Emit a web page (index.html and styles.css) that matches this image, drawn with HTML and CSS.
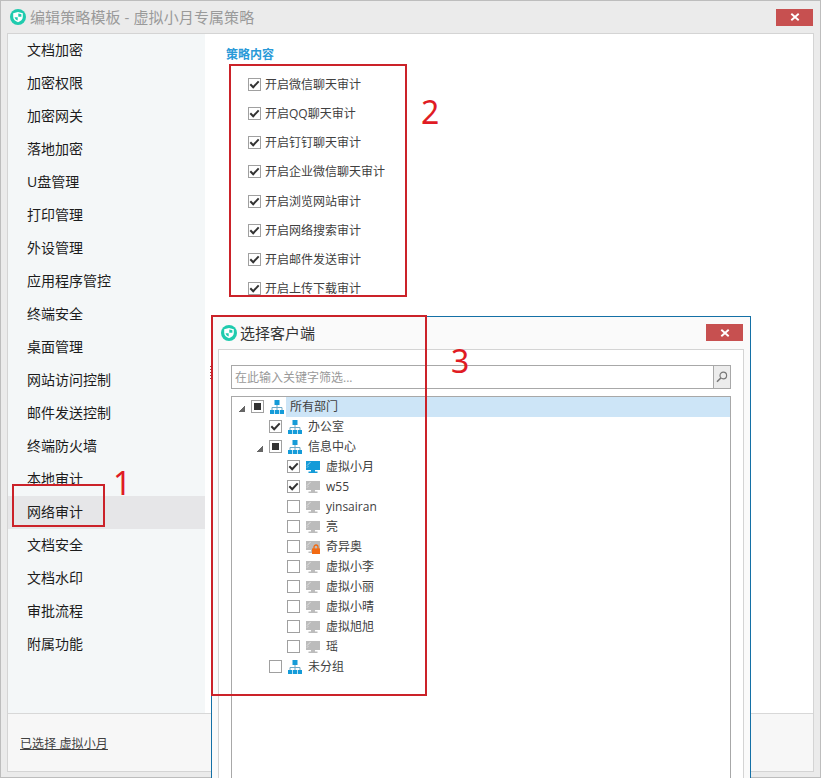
FILE: index.html
```html
<!DOCTYPE html>
<html lang="zh-CN">
<head>
    <meta charset="UTF-8" />
    <meta name="viewport" content="width=device-width, initial-scale=1" />
    <title>编辑策略模板</title>
    <link rel="stylesheet" href="styles.css">
</head>
<body>

<svg class="sprite" width="0" height="0">
    <symbol id="logo" viewBox="0 0 16 16">
        <circle cx="8" cy="8" r="8" fill="#1fcbae"/>
        <path d="M8 3 L12.8 4.2 V8 C12.8 10.6 10.6 12.2 8 13.2 C5.4 12.2 3.2 10.6 3.2 8 V4.2 Z" fill="#fff"/>
        <path d="M8.3 4.6 L11.4 5.3 V7.7 H8.3 Z M7.7 8.3 V11.6 C6 10.9 4.8 9.8 4.6 8.3 Z" fill="#1fcbae"/>
    </symbol>
    <symbol id="cross" viewBox="0 0 10 8">
        <path d="M1.3 .8 L8.7 7.2 M8.7 .8 L1.3 7.2" stroke="#fff" stroke-width="1.9"/>
    </symbol>
    <symbol id="tick" viewBox="0 0 11 11">
        <path d="M1.3 5.2 L4.2 8.2 L9.7 2.4" fill="none" stroke="#333" stroke-width="2"/>
    </symbol>
    <symbol id="org" viewBox="0 0 14 14">
        <path d="M7 5v5 M2 10V7.5h10V10" fill="none" stroke="#6fa9c6"/>
        <path d="M4.5 0h5v5h-5z M0 10h4.2v4H0z M4.9 10h4.2v4H4.9z M9.8 10H14v4H9.8z" fill="#149bd8"/>
    </symbol>
    <symbol id="pc" viewBox="0 0 14 12">
        <path d="M0 0h14v9H0z M5 9h4v1.5H5z M2.5 10.5h9V12h-9z" fill="currentColor"/>
        <path d="M1 4.6 L4.6 1 M1 6.6 L2.4 5.2" stroke="#fff" stroke-width=".8" opacity=".7"/>
    </symbol>
    <symbol id="lock" viewBox="0 0 8 10">
        <path d="M2 5V3a2 2 0 0 1 4 0v2" fill="none" stroke="#f26a12" stroke-width="1.3"/>
        <path d="M0 4.4h8V10H0z" fill="#f26a12"/>
    </symbol>
</svg>

<div class="window">
    <header class="titlebar">
        <svg class="logo"><use href="#logo"/></svg>
        <h1>编辑策略模板 - 虚拟小月专属策略</h1>
        <button class="close"><svg><use href="#cross"/></svg></button>
    </header>

    <div class="panel">
        <div class="main">
            <nav class="sidebar">
                <a>文档加密</a>
                <a>加密权限</a>
                <a>加密网关</a>
                <a>落地加密</a>
                <a>U盘管理</a>
                <a>打印管理</a>
                <a>外设管理</a>
                <a>应用程序管控</a>
                <a>终端安全</a>
                <a>桌面管理</a>
                <a>网站访问控制</a>
                <a>邮件发送控制</a>
                <a>终端防火墙</a>
                <a>本地审计</a>
                <a class="active">网络审计</a>
                <a>文档安全</a>
                <a>文档水印</a>
                <a>审批流程</a>
                <a>附属功能</a>
            </nav>
            <section class="content">
                <h2>策略内容</h2>
                <div class="options">
                    <label><svg class="check"><use href="#tick"/></svg>开启微信聊天审计</label>
                    <label><svg class="check"><use href="#tick"/></svg>开启QQ聊天审计</label>
                    <label><svg class="check"><use href="#tick"/></svg>开启钉钉聊天审计</label>
                    <label><svg class="check"><use href="#tick"/></svg>开启企业微信聊天审计</label>
                    <label><svg class="check"><use href="#tick"/></svg>开启浏览网站审计</label>
                    <label><svg class="check"><use href="#tick"/></svg>开启网络搜索审计</label>
                    <label><svg class="check"><use href="#tick"/></svg>开启邮件发送审计</label>
                    <label><svg class="check"><use href="#tick"/></svg>开启上传下载审计</label>
                </div>
            </section>
        </div>
        <footer class="footer"><a>已选择 虚拟小月</a></footer>
    </div>
</div>

<div class="dialog">
    <header class="titlebar">
        <svg class="logo"><use href="#logo"/></svg>
        <h1>选择客户端</h1>
        <button class="close"><svg><use href="#cross"/></svg></button>
    </header>
    <div class="dialog-body">
        <div class="search">
            <span>在此输入关键字筛选...</span>
            <button>
                <svg width="12" height="12" viewBox="0 0 12 12" fill="none" stroke="#777">
                    <circle cx="7.3" cy="4.5" r="3.3" stroke-width="1.2"/>
                    <path d="M4.8 7 L1 10.8" stroke-width="1.6"/>
                </svg>
            </button>
        </div>
        <ul class="tree">
            <li class="selected"><b class="arrow"></b><i class="check part"></i><svg class="org"><use href="#org"/></svg><span>所有部门</span></li>
            <li class="l2"><svg class="check"><use href="#tick"/></svg><svg class="org"><use href="#org"/></svg><span>办公室</span></li>
            <li class="l2"><b class="arrow"></b><i class="check part"></i><svg class="org"><use href="#org"/></svg><span>信息中心</span></li>
            <li class="l3"><svg class="check"><use href="#tick"/></svg><svg class="pc online"><use href="#pc"/></svg><span>虚拟小月</span></li>
            <li class="l3"><svg class="check"><use href="#tick"/></svg><svg class="pc"><use href="#pc"/></svg><span>w55</span></li>
            <li class="l3"><i class="check"></i><svg class="pc"><use href="#pc"/></svg><span>yinsairan</span></li>
            <li class="l3"><i class="check"></i><svg class="pc"><use href="#pc"/></svg><span>亮</span></li>
            <li class="l3"><i class="check"></i><svg class="pc"><use href="#pc"/></svg><svg class="lock"><use href="#lock"/></svg><span>奇异奥</span></li>
            <li class="l3"><i class="check"></i><svg class="pc"><use href="#pc"/></svg><span>虚拟小李</span></li>
            <li class="l3"><i class="check"></i><svg class="pc"><use href="#pc"/></svg><span>虚拟小丽</span></li>
            <li class="l3"><i class="check"></i><svg class="pc"><use href="#pc"/></svg><span>虚拟小晴</span></li>
            <li class="l3"><i class="check"></i><svg class="pc"><use href="#pc"/></svg><span>虚拟旭旭</span></li>
            <li class="l3"><i class="check"></i><svg class="pc"><use href="#pc"/></svg><span>瑶</span></li>
            <li class="l2"><i class="check"></i><svg class="org"><use href="#org"/></svg><span>未分组</span></li>
        </ul>
    </div>
</div>

<!-- step markers -->
<div class="mark mark-1"></div>
<div class="mark mark-2"></div>
<div class="mark mark-3"></div>
<div class="dots"></div>
<div class="step step-1">1</div>
<div class="step step-2">2</div>
<div class="step step-3">3</div>

</body>
</html>
```
FILE: styles.css
```css
* {
    box-sizing: border-box;
}
body {
    margin: 0;
    position: relative;
    width: 821px;
    height: 778px;
    overflow: hidden;
    font-family: "Open Sans", "Noto Sans CJK SC", sans-serif;
    font-size: 12px;
    color: #404040;
}
.sprite {
    position: absolute;
}
h1, h2, ul {
    margin: 0;
    padding: 0;
    font-weight: normal;
}
button {
    padding: 0;
    border: none;
}
.window {
    height: 778px;
    background: #ebebeb;
    border: 1px solid #bdbdbd;
    padding: 0 6px 6px;
}
.titlebar {
    height: 32px;
    display: flex;
    align-items: center;
    padding: 0 1px 0 3px;
}
.titlebar h1 {
    flex: 1;
    margin-left: 4px;
    font-size: 15px;
    line-height: 30px;
    letter-spacing: 0.1px;
    color: #9a9a9a;
}
.logo {
    width: 16px;
    height: 16px;
}
.close {
    width: 37px;
    height: 17px;
    background: #c75050;
    display: flex;
    align-items: center;
    justify-content: center;
}
.close svg {
    width: 10px;
    height: 8px;
}
.panel {
    height: 739px;
    background: #fff;
    border: 1px solid #d4d4d4;
    display: flex;
    flex-direction: column;
}
.main {
    flex: 1;
    display: flex;
}
.sidebar {
    width: 197px;
    background: #f4f7f8;
}
.sidebar a {
    display: block;
    height: 33px;
    line-height: 32px;
    padding-left: 19px;
    font-size: 14px;
    color: #1c1c1c;
}
.sidebar .active {
    background: #e6e6e8;
}
.content {
    padding: 11px 0 0 21px;
}
.content h2 {
    font-size: 12px;
    line-height: 20px;
    font-weight: bold;
    color: #2a9ad8;
}
.options {
    padding: 5px 0 0 22px;
}
.options label {
    display: flex;
    align-items: center;
    gap: 4px;
    height: 29.15px;
    line-height: 17px;
}
.check {
    flex: none;
    width: 13px;
    height: 13px;
    border: 1px solid #a0a0a0;
    background: #fff;
    display: flex;
    align-items: center;
    justify-content: center;
}
.check.part::after {
    content: "";
    width: 7px;
    height: 7px;
    background: #333;
}
.footer {
    height: 58px;
    background: #f7f7f7;
    border-top: 1px solid #d8d8d8;
    padding: 21px 0 0 12px;
    line-height: 18px;
}
.footer a {
    text-decoration: underline;
    letter-spacing: 0.1px;
}

/* client picker */
.dialog {
    position: absolute;
    left: 211px;
    top: 316px;
    width: 540px;
    height: 480px;
    background: #fafafa;
    border: 1px solid #1470a6;
    padding: 0 6px;
}
.dialog .titlebar h1 {
    color: #333;
    letter-spacing: 0;
    margin-left: 3px;
}
.dialog .close {
    margin-bottom: 1px;
}
.dialog-body {
    height: 460px;
    background: #fff;
    border: 1px solid #d4d4d4;
    padding: 15px 12px 0;
}
.search {
    height: 24px;
    border: 1px solid #a8a8a8;
    display: flex;
    align-items: center;
}
.search span {
    flex: 1;
    padding-left: 3px;
    color: #999;
}
.search button {
    width: 17px;
    height: 22px;
    background: #ececec;
    border-left: 1px solid #a8a8a8;
    display: flex;
    align-items: center;
    justify-content: center;
}
.tree {
    list-style: none;
    margin-top: 7px;
    height: 420px;
    border: 1px solid #a8a8a8;
}
.tree li {
    position: relative;
    height: 20px;
    padding-left: 19px;
    display: flex;
    align-items: center;
}
.tree .l2 {
    padding-left: 37px;
}
.tree .l3 {
    padding-left: 55px;
}
.tree .check {
    margin-bottom: 1px;
}
.tree span {
    flex: 1;
    margin-left: 2px;
    padding-left: 4px;
    line-height: 20px;
}
.tree .selected span {
    background: #cde5f7;
}
.arrow {
    width: 6px;
    height: 6px;
    margin: 3px 6px 0 -12px;
    background: linear-gradient(135deg, transparent 50%, #666 50%);
}
.org {
    width: 14px;
    height: 14px;
    margin-left: 6px;
}
.pc {
    width: 14px;
    height: 12px;
    margin-left: 6px;
    color: #bcbcbc;
}
.pc.online {
    color: #149bd8;
}
.lock {
    position: absolute;
    left: 80px;
    top: 7px;
    width: 8px;
    height: 10px;
}

.mark {
    position: absolute;
    border: 2px solid #cb2229;
}
.mark-1 {
    left: 12px;
    top: 484px;
    width: 93px;
    height: 43px;
}
.mark-2 {
    left: 229px;
    top: 64px;
    width: 178px;
    height: 233px;
}
.mark-3 {
    left: 211px;
    top: 315px;
    width: 216px;
    height: 381px;
}
.dots {
    position: absolute;
    left: 210px;
    top: 366px;
    width: 1px;
    height: 14px;
    background: repeating-linear-gradient(#a04048 0 1px, transparent 1px 3px);
}
.step {
    position: absolute;
    font-family: "Noto Sans", sans-serif;
    font-size: 32px;
    line-height: 32px;
    color: #e01b24;
}
.step-1 {
    left: 113px;
    top: 467px;
}
.step-2 {
    left: 421px;
    top: 96px;
}
.step-3 {
    left: 451px;
    top: 345px;
}
```
